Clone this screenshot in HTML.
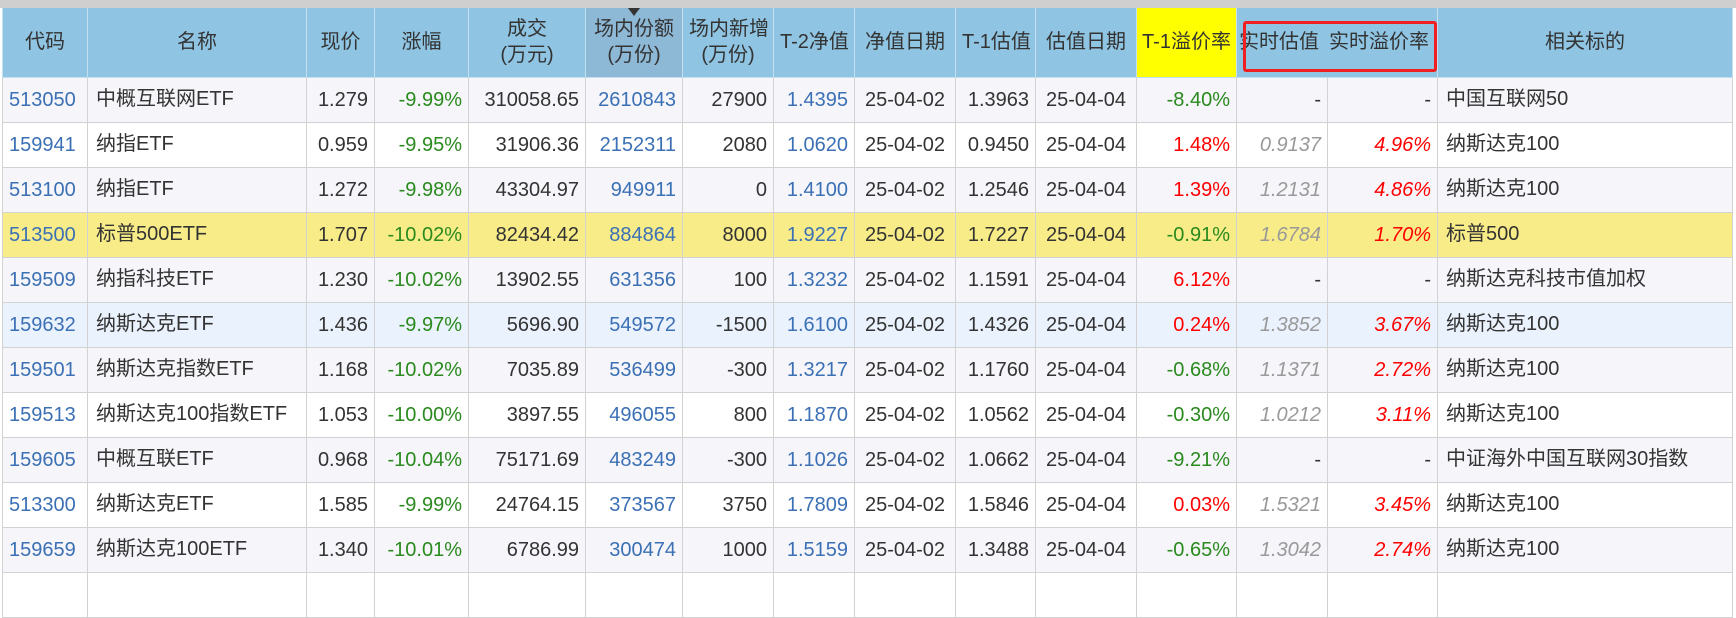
<!DOCTYPE html>
<html><head><meta charset="utf-8"><style>
html,body{margin:0;padding:0;width:1736px;height:580px;overflow:hidden;background:#fff;}
body{font-family:"Liberation Sans","Noto Sans CJK SC",sans-serif;font-size:20px;color:#333;}
.top{position:absolute;left:0;top:0;width:1736px;height:8px;background:#cfcfcf;}
table{position:absolute;left:2px;top:8px;border-collapse:collapse;table-layout:fixed;width:1730px;}
td,th{border:1px solid #d2d2d2;padding:0 6px;white-space:nowrap;overflow:hidden;box-sizing:border-box;line-height:24px;}
th{background:#8fc4e3;height:69px;font-weight:normal;color:#333;line-height:26px;border-color:#c4dff0;border-top:none;}
th.sort{background:#8db8d6;position:relative;}
th.sort:after{content:"";position:absolute;left:50%;top:0;margin-left:-6px;border-left:6px solid transparent;border-right:6px solid transparent;border-top:8px solid #333;}
th.y{background:#ffff00;}
td{height:45px;}
tr:nth-child(even) td{background:#f5f5fa;}
tr:nth-child(odd) td{background:#fff;}
tr.hl td{background:#f8ec88 !important;}
tr.bl td{background:#eaf2fd !important;}
.c{color:#3b70b4;}
.r{text-align:right;}
.m{text-align:center;}
.g{color:#2a8a1e;}
.red{color:#f00;}
.i{font-style:italic;color:#999;}
.ir{font-style:italic;color:#f00;}
.nb{border-right:none !important;}
.nl{border-left:none !important;}
.n{padding-left:8px;}
.n span{position:relative;top:-1px;}
.box{position:absolute;left:1243px;top:21px;width:194px;height:51px;border:3px solid #f02020;border-radius:3px;box-sizing:border-box;}
</style></head><body>
<div class="top"></div>
<table>
<colgroup>
<col style="width:85px"><col style="width:219px"><col style="width:68px"><col style="width:94px"><col style="width:117px"><col style="width:97px"><col style="width:91px"><col style="width:81px"><col style="width:101px"><col style="width:80px"><col style="width:101px"><col style="width:100px"><col style="width:91px"><col style="width:110px"><col style="width:295px">
</colgroup>
<tr><th>代码</th><th>名称</th><th>现价</th><th>涨幅</th><th>成交<br>(万元)</th><th class="sort">场内份额<br>(万份)</th><th>场内新增<br>(万份)</th><th>T-2净值</th><th>净值日期</th><th>T-1估值</th><th>估值日期</th><th class="y" style="padding:0 2px">T-1溢价率</th><th class="nb" style="padding:0 2px;text-align:left">实时估值</th><th class="nl" style="text-align:right;padding:0 8px 0 0">实时溢价率</th><th>相关标的</th></tr>
<tr><td class="c">513050</td><td class="n"><span>中概互联网ETF</span></td><td class="r">1.279</td><td class="r g">-9.99%</td><td class="r">310058.65</td><td class="r c">2610843</td><td class="r">27900</td><td class="r c">1.4395</td><td class="m">25-04-02</td><td class="r">1.3963</td><td class="m">25-04-04</td><td class="r g">-8.40%</td><td class="r">-</td><td class="r">-</td><td class="n"><span>中国互联网50</span></td></tr>
<tr><td class="c">159941</td><td class="n"><span>纳指ETF</span></td><td class="r">0.959</td><td class="r g">-9.95%</td><td class="r">31906.36</td><td class="r c">2152311</td><td class="r">2080</td><td class="r c">1.0620</td><td class="m">25-04-02</td><td class="r">0.9450</td><td class="m">25-04-04</td><td class="r red">1.48%</td><td class="r i">0.9137</td><td class="r ir">4.96%</td><td class="n"><span>纳斯达克100</span></td></tr>
<tr><td class="c">513100</td><td class="n"><span>纳指ETF</span></td><td class="r">1.272</td><td class="r g">-9.98%</td><td class="r">43304.97</td><td class="r c">949911</td><td class="r">0</td><td class="r c">1.4100</td><td class="m">25-04-02</td><td class="r">1.2546</td><td class="m">25-04-04</td><td class="r red">1.39%</td><td class="r i">1.2131</td><td class="r ir">4.86%</td><td class="n"><span>纳斯达克100</span></td></tr>
<tr class="hl"><td class="c">513500</td><td class="n"><span>标普500ETF</span></td><td class="r">1.707</td><td class="r g">-10.02%</td><td class="r">82434.42</td><td class="r c">884864</td><td class="r">8000</td><td class="r c">1.9227</td><td class="m">25-04-02</td><td class="r">1.7227</td><td class="m">25-04-04</td><td class="r g">-0.91%</td><td class="r i">1.6784</td><td class="r ir">1.70%</td><td class="n"><span>标普500</span></td></tr>
<tr><td class="c">159509</td><td class="n"><span>纳指科技ETF</span></td><td class="r">1.230</td><td class="r g">-10.02%</td><td class="r">13902.55</td><td class="r c">631356</td><td class="r">100</td><td class="r c">1.3232</td><td class="m">25-04-02</td><td class="r">1.1591</td><td class="m">25-04-04</td><td class="r red">6.12%</td><td class="r">-</td><td class="r">-</td><td class="n"><span>纳斯达克科技市值加权</span></td></tr>
<tr class="bl"><td class="c">159632</td><td class="n"><span>纳斯达克ETF</span></td><td class="r">1.436</td><td class="r g">-9.97%</td><td class="r">5696.90</td><td class="r c">549572</td><td class="r">-1500</td><td class="r c">1.6100</td><td class="m">25-04-02</td><td class="r">1.4326</td><td class="m">25-04-04</td><td class="r red">0.24%</td><td class="r i">1.3852</td><td class="r ir">3.67%</td><td class="n"><span>纳斯达克100</span></td></tr>
<tr><td class="c">159501</td><td class="n"><span>纳斯达克指数ETF</span></td><td class="r">1.168</td><td class="r g">-10.02%</td><td class="r">7035.89</td><td class="r c">536499</td><td class="r">-300</td><td class="r c">1.3217</td><td class="m">25-04-02</td><td class="r">1.1760</td><td class="m">25-04-04</td><td class="r g">-0.68%</td><td class="r i">1.1371</td><td class="r ir">2.72%</td><td class="n"><span>纳斯达克100</span></td></tr>
<tr><td class="c">159513</td><td class="n"><span>纳斯达克100指数ETF</span></td><td class="r">1.053</td><td class="r g">-10.00%</td><td class="r">3897.55</td><td class="r c">496055</td><td class="r">800</td><td class="r c">1.1870</td><td class="m">25-04-02</td><td class="r">1.0562</td><td class="m">25-04-04</td><td class="r g">-0.30%</td><td class="r i">1.0212</td><td class="r ir">3.11%</td><td class="n"><span>纳斯达克100</span></td></tr>
<tr><td class="c">159605</td><td class="n"><span>中概互联ETF</span></td><td class="r">0.968</td><td class="r g">-10.04%</td><td class="r">75171.69</td><td class="r c">483249</td><td class="r">-300</td><td class="r c">1.1026</td><td class="m">25-04-02</td><td class="r">1.0662</td><td class="m">25-04-04</td><td class="r g">-9.21%</td><td class="r">-</td><td class="r">-</td><td class="n"><span>中证海外中国互联网30指数</span></td></tr>
<tr><td class="c">513300</td><td class="n"><span>纳斯达克ETF</span></td><td class="r">1.585</td><td class="r g">-9.99%</td><td class="r">24764.15</td><td class="r c">373567</td><td class="r">3750</td><td class="r c">1.7809</td><td class="m">25-04-02</td><td class="r">1.5846</td><td class="m">25-04-04</td><td class="r red">0.03%</td><td class="r i">1.5321</td><td class="r ir">3.45%</td><td class="n"><span>纳斯达克100</span></td></tr>
<tr><td class="c">159659</td><td class="n"><span>纳斯达克100ETF</span></td><td class="r">1.340</td><td class="r g">-10.01%</td><td class="r">6786.99</td><td class="r c">300474</td><td class="r">1000</td><td class="r c">1.5159</td><td class="m">25-04-02</td><td class="r">1.3488</td><td class="m">25-04-04</td><td class="r g">-0.65%</td><td class="r i">1.3042</td><td class="r ir">2.74%</td><td class="n"><span>纳斯达克100</span></td></tr>
<tr><td></td><td></td><td></td><td></td><td></td><td></td><td></td><td></td><td></td><td></td><td></td><td></td><td></td><td></td><td></td></tr>
</table>
<div class="box"></div>
</body></html>
